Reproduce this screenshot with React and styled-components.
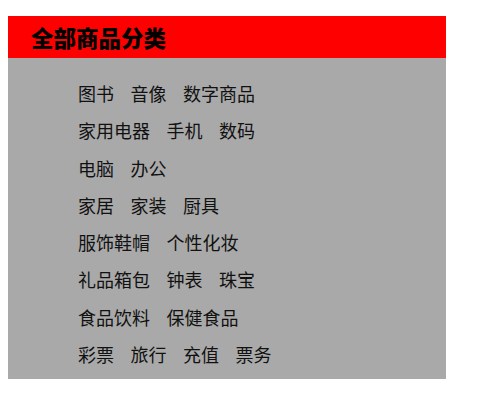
import React from 'react';
import styled, { createGlobalStyle } from 'styled-components';

const GlobalStyle = createGlobalStyle`
  body {
    margin: 16px 8px 8px;
    background: #ffffff;
    font-family: "Noto Sans CJK SC", "Noto Sans", sans-serif;
  }
`;

const categories = [
  ['图书', '音像', '数字商品'],
  ['家用电器', '手机', '数码'],
  ['电脑', '办公'],
  ['家居', '家装', '厨具'],
  ['服饰鞋帽', '个性化妆'],
  ['礼品箱包', '钟表', '珠宝'],
  ['食品饮料', '保健食品'],
  ['彩票', '旅行', '充值', '票务']
];

const StyledPanel = styled.div`
  width: 438px;
`;

const StyledHeader = styled.h2`
  margin: 0;
  height: 42px;
  line-height: 42px;
  padding-left: 23px;
  background: #ff0000;
  color: #000000;
  font-size: 22.5px;
  font-weight: 900;
`;

const StyledList = styled.ul`
  margin: 0;
  list-style: none;
  padding: 17px 0 6px 70px;
  background: #a9a9a9;
`;

const StyledRow = styled.li`
  display: flex;
  gap: 16.5px;
  height: 37.3px;
  line-height: 37.3px;
  font-size: 18px;
  color: #111111;
`;

const App = () => (
  <StyledPanel>
    <GlobalStyle />
    <StyledHeader>全部商品分类</StyledHeader>
    <StyledList>
      {categories.map((row, i) => (
        <StyledRow key={i}>
          {row.map(name => (
            <span key={name}>{name}</span>
          ))}
        </StyledRow>
      ))}
    </StyledList>
  </StyledPanel>
);

export default App;
